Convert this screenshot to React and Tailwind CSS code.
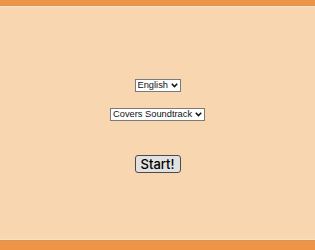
function Chevron() {
  return (
    <svg width="7" height="5" viewBox="0 0 7 5" className="shrink-0">
      <path d="M0.8 0.8 L3.5 3.6 L6.2 0.8" fill="none" stroke="#111" strokeWidth="1.5" />
    </svg>
  );
}

function Dropdown({ value }) {
  return (
    <div className="flex items-center h-[13px] bg-white border border-[#7a7a7a] pl-[2px] pr-[2px] gap-[2px]">
      <select className="appearance-none bg-transparent text-[9.3px] leading-none text-[#111] outline-none p-0">
        <option>{value}</option>
      </select>
      <Chevron />
    </div>
  );
}

export default function App() {
  return (
    <div className="w-[315px] h-[250px] flex flex-col bg-[#f8d6b0] font-['Liberation_Sans',Arial,sans-serif]">
      <div className="h-[5px] bg-[#ee9447]" />
      <div className="h-px bg-[#d9935a]" />
      <div className="h-px bg-[#fbe3c8]" />
      <div className="flex-1 flex flex-col items-center">
        <div className="mt-[72px]">
          <Dropdown value="English" />
        </div>
        <div className="mt-[16px]">
          <Dropdown value="Covers Soundtrack" />
        </div>
        <button className="mt-[34px] w-[46px] h-[18px] text-[13px] leading-none font-medium font-['Inter',sans-serif] text-black bg-[#e1e1e1] border border-[#4a4a4a] rounded-[3px]">
          Start!
        </button>
      </div>
      <div className="h-px bg-[#fbe3c8]" />
      <div className="h-px bg-[#d9935a]" />
      <div className="h-[9px] bg-[#ee9447]" />
    </div>
  );
}
